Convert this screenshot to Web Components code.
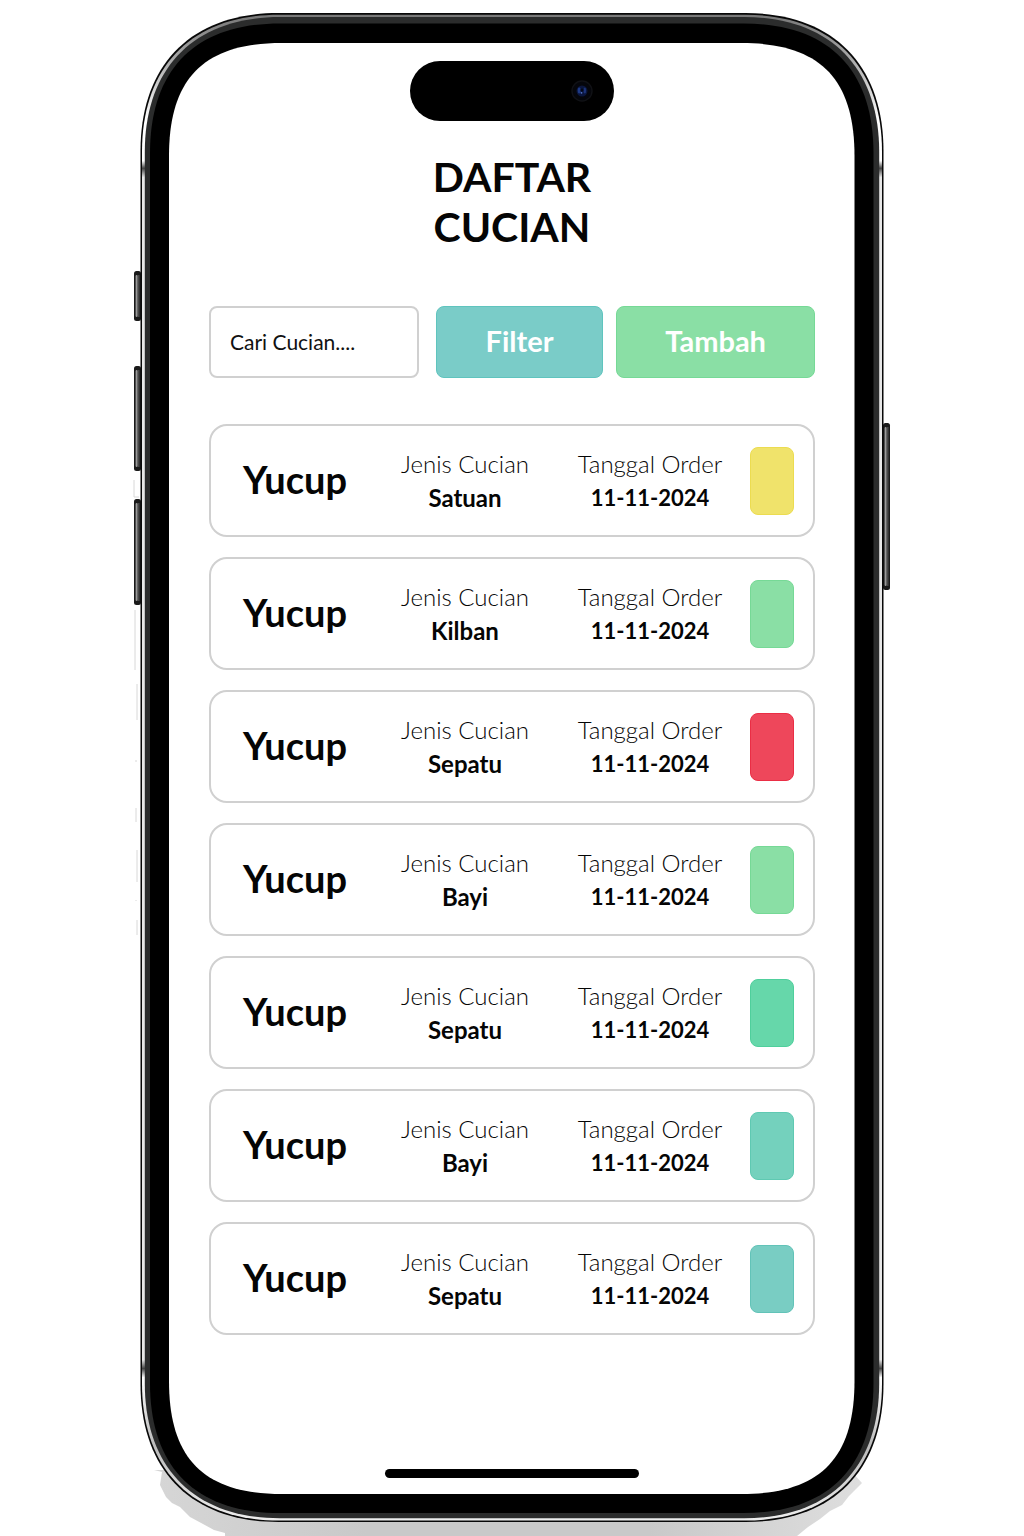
<!DOCTYPE html>
<html lang="id">
<head>
<meta charset="utf-8">
<meta name="viewport" content="width=device-width, initial-scale=1">
<title>Daftar Cucian</title>
<style>
  body { margin: 0; background: #fff; color: #050505; font-family: Lato, "Open Sans", sans-serif; overflow-x: hidden; }
</style>
</head>
<body>
<phone-frame>
  <laundry-title></laundry-title>
  <laundry-toolbar></laundry-toolbar>
  <laundry-list>
    <laundry-card name="Yucup" kind="Satuan" date="11-11-2024" style="--status:#f0e36b;--edge:#ecdc50"></laundry-card>
    <laundry-card name="Yucup" kind="Kilban" date="11-11-2024" style="--status:#8adfa5;--edge:#76d996"></laundry-card>
    <laundry-card name="Yucup" kind="Sepatu" date="11-11-2024" style="--status:#ee475b;--edge:#ea2e45"></laundry-card>
    <laundry-card name="Yucup" kind="Bayi" date="11-11-2024" style="--status:#8adfa5;--edge:#76d996"></laundry-card>
    <laundry-card name="Yucup" kind="Sepatu" date="11-11-2024" style="--status:#66d7aa;--edge:#4fcf9c"></laundry-card>
    <laundry-card name="Yucup" kind="Bayi" date="11-11-2024" style="--status:#74d1bd;--edge:#5fc9b2"></laundry-card>
    <laundry-card name="Yucup" kind="Sepatu" date="11-11-2024" style="--status:#79cdc3;--edge:#62c3b8"></laundry-card>
  </laundry-list>
</phone-frame>

<script>
/* Rectangle with soft continuous corners. l = corner extent, k = handle distance from the corner. */
function softRect(x1, y1, x2, y2, l, k) {
  const h = l * k;
  return `M${x1} ${y1 + l}C${x1} ${y1 + h} ${x1 + h} ${y1} ${x1 + l} ${y1}` +
    `H${x2 - l}C${x2 - h} ${y1} ${x2} ${y1 + h} ${x2} ${y1 + l}` +
    `V${y2 - l}C${x2} ${y2 - h} ${x2 - h} ${y2} ${x2 - l} ${y2}` +
    `H${x1 + l}C${x1 + h} ${y2} ${x1} ${y2 - h} ${x1} ${y2 - l}Z`;
}
const sideButton = (x, y, h) =>
  `<rect x="${x}" y="${y}" width="7" height="${h}" rx="2.5" fill="#1a1a1a"/>` +
  `<rect x="${x + 1.6}" y="${y + 4}" width="2" height="${h - 8}" rx="1" fill="#999"/>` +
  `<rect x="${x + 4.4}" y="${y + 4}" width="0.9" height="${h - 8}" fill="#666"/>`;

class PhoneFrame extends HTMLElement {
  constructor() {
    super();
    this.attachShadow({ mode: 'open' }).innerHTML = `
      <style>
        :host { display: block; box-sizing: border-box; position: relative; width: calc(100% - 32px); max-width: 744px; margin: 13px auto 14px; padding: 48px 69px 44px; }
        .body { position: absolute; inset: 0; width: 100%; height: 100%; overflow: visible; z-index: -1; }
        .island { display: flex; align-items: center; justify-content: flex-end; box-sizing: border-box; width: 204px; height: 60px; margin: 0 auto; padding-right: 20px; border-radius: 30px; background: #000; }
        .home { width: 254px; max-width: 100%; height: 9px; margin: 134px auto 0; border-radius: 5px; background: #000; }
      </style>
      <svg class="body" viewBox="140 13 744 1509" preserveAspectRatio="none" aria-hidden="true">
        <defs>
          <linearGradient id="shade" x1="0" y1="0" x2="1" y2="0">
            <stop offset="0" stop-color="#d6d6d6"/><stop offset=".3" stop-color="#c9c9c9"/>
            <stop offset=".7" stop-color="#c9c9c9"/><stop offset="1" stop-color="#dedede"/>
          </linearGradient>
          <linearGradient id="rim" x1="0" y1="0" x2="0" y2="1">
            <stop offset="0" stop-color="#777"/><stop offset=".03" stop-color="#aaa"/><stop offset=".07" stop-color="#fff"/>
            <stop offset=".097" stop-color="#fff"/><stop offset=".102" stop-color="#444"/><stop offset=".108" stop-color="#e8e8e8"/>
            <stop offset=".893" stop-color="#e8e8e8"/><stop offset=".899" stop-color="#444"/><stop offset=".905" stop-color="#fff"/>
            <stop offset=".95" stop-color="#bbb"/><stop offset="1" stop-color="#eee"/>
          </linearGradient>
        </defs>
        <path d="M154 1470L162 1472L160 1485L166 1497L172 1503L180 1507L190 1517L203 1524L214 1530L225 1533V1536H797L808 1527L820 1519L830 1511L842 1505L849 1496L856 1489L862 1483L850 1470Z" fill="url(#shade)"/>
        <path d="M134 480V497H139M135 610V670M137 684V720M136 760V762M136 808V822M137 850V882M136 900V901M137 920V935" stroke="#d8d8d8" stroke-width="1" fill="none"/>
        ${sideButton(134, 271, 50)}${sideButton(134, 366, 105)}${sideButton(134, 499, 106)}${sideButton(883, 423, 167)}
        <path d="${softRect(140.5, 13, 883.5, 1522, 138, .37)}" fill="#080808"/>
        <path d="${softRect(142, 14.7, 882, 1520.6, 137, .37)}" fill="url(#rim)"/>
        <path d="${softRect(144.8, 17, 879.2, 1518.2, 135, .37)}" fill="#2b2c2c"/>
        <path d="${softRect(150, 23.5, 873.5, 1513, 130, .35)}" fill="#000"/>
        <path d="${softRect(169, 43, 854.5, 1494, 113, .31)}" fill="#fff"/>
      </svg>
      <div class="island">
        <svg width="24" height="24" viewBox="0 0 24 24" aria-hidden="true">
          <circle cx="12" cy="12" r="10" fill="#05060b" stroke="#101115" stroke-width="1.4"/>
          <circle cx="12" cy="12" r="5.5" fill="#0b163d"/>
          <ellipse cx="9.2" cy="11.5" rx="1.5" ry="3" fill="#1e3a86"/>
          <ellipse cx="14.8" cy="11.5" rx="1.3" ry="3" fill="#1b337a"/>
          <circle cx="12" cy="11" r="1.6" fill="#050817"/>
          <circle cx="11.5" cy="13.8" r=".9" fill="#5674c8"/>
        </svg>
      </div>
      <main><slot></slot></main>
      <div class="home"></div>`;
  }
}

class LaundryTitle extends HTMLElement {
  constructor() {
    super();
    this.attachShadow({ mode: 'open' }).innerHTML = `
      <style>
        :host { display: block; padding: 31px 0 54px; }
        h1 { width: min-content; margin: 0 auto; font-size: 41px; line-height: 50px; font-weight: 700; text-align: center; }
      </style>
      <h1>DAFTAR CUCIAN</h1>`;
  }
}

class LaundryToolbar extends HTMLElement {
  constructor() {
    super();
    this.attachShadow({ mode: 'open' }).innerHTML = `
      <style>
        :host { display: flex; gap: 17px; margin-bottom: 46px; }
        label { flex: 210 1 0; min-width: 0; display: flex; }
        .actions { flex: 379 1 0; display: flex; gap: 13px; }
        input, button { box-sizing: border-box; height: 72px; min-width: 0; border-radius: 8px; font-family: inherit; }
        input { width: 100%; margin: 0; padding: 0 19px 2px; border: 2px solid #d0d0d0; background: #fff; color: #050505; font-size: 21px; }
        input::placeholder { color: #111; opacity: 1; }
        button { padding: 0 0 4px; border: 1px solid; color: #fff; font-size: 29px; font-weight: 700; cursor: pointer; }
        .filter { flex: 167 1 0; background: #7accc8; border-color: #5fc4be; }
        .add { flex: 199 1 0; background: #8adfa5; border-color: #76d996; }
      </style>
      <label><input type="text" placeholder="Cari Cucian...." aria-label="Cari Cucian"></label>
      <div class="actions">
        <button class="filter" type="button">Filter</button>
        <button class="add" type="button">Tambah</button>
      </div>`;
  }
}

class LaundryList extends HTMLElement {
  constructor() {
    super();
    this.attachShadow({ mode: 'open' }).innerHTML = `
      <style>:host { display: flex; flex-direction: column; gap: 20px; }</style>
      <slot></slot>`;
  }
}

class LaundryCard extends HTMLElement {
  connectedCallback() {
    const root = this.shadowRoot || this.attachShadow({ mode: 'open' });
    root.innerHTML = `
      <style>
        :host { display: grid; grid-template-columns: 137fr 170fr 200fr 44px; align-items: center; box-sizing: border-box; min-height: 113px; padding: 0 19px 0 32px; border: 2px solid #d0d0d0; border-radius: 18px; }
        h2, dl, dd { margin: 0; }
        h2 { padding-bottom: 4px; font-size: 38px; line-height: 48px; font-weight: 700; }
        dl { text-align: center; white-space: nowrap; font-size: 24px; line-height: 34px; }
        dt { font-weight: 300; }
        dd { font-weight: 700; }
        .date { font-size: 22px; }
        .status { height: 68px; box-sizing: border-box; border-radius: 8px; background: var(--status); border: 1px solid var(--edge); }
      </style>
      <h2></h2>
      <dl><dt>Jenis Cucian</dt><dd class="kind"></dd></dl>
      <dl><dt>Tanggal Order</dt><dd class="date"></dd></dl>
      <div class="status"></div>`;
    root.querySelector('h2').textContent = this.getAttribute('name');
    root.querySelector('.kind').textContent = this.getAttribute('kind');
    root.querySelector('.date').textContent = this.getAttribute('date');
  }
}

customElements.define('phone-frame', PhoneFrame);
customElements.define('laundry-title', LaundryTitle);
customElements.define('laundry-toolbar', LaundryToolbar);
customElements.define('laundry-list', LaundryList);
customElements.define('laundry-card', LaundryCard);
</script>
</body>
</html>
